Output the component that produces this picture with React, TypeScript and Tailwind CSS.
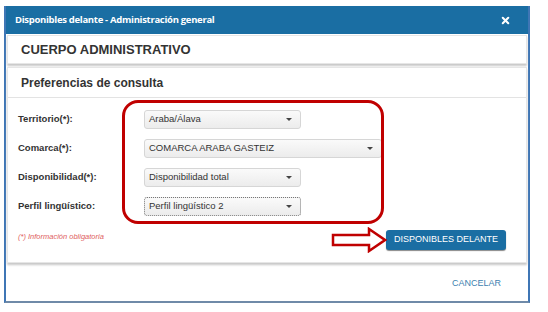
import { X } from "lucide-react";

type Row = { label: string; value: string; wide?: boolean; focus?: boolean };

const rows: Row[] = [
  { label: "Territorio(*):", value: "Araba/Álava" },
  { label: "Comarca(*):", value: "COMARCA ARABA GASTEIZ", wide: true },
  { label: "Disponibilidad(*):", value: "Disponibilidad total" },
  { label: "Perfil lingüístico:", value: "Perfil lingüístico 2", focus: true },
];

function Select({ value, wide, focus }: { value: string; wide?: boolean; focus?: boolean }) {
  return (
    <div
      className={
        "flex h-[19px] items-center justify-between rounded-[3px] bg-gradient-to-b from-[#fafafa] to-[#ececec] pl-[4px] pr-[8px] text-[9.5px] text-[#333] " +
        (wide ? "w-[238px] " : "w-[157px] ") +
        (focus ? "border border-dotted border-[#777]" : "border border-[#d6d6d6]")
      }
    >
      <span>{value}</span>
      <span className="h-0 w-0 border-x-[3px] border-t-[3px] border-x-transparent border-t-[#444]" />
    </div>
  );
}

export default function App() {
  return (
    <div className="h-[312px] w-[548px] bg-white font-['Liberation_Sans',Arial,sans-serif]">
      <div className="ml-[4px] pt-[6px]">
        <div className="flex h-[297px] w-[526px] flex-col border-x-2 border-b-2 border-x-[#3f76b5] border-b-[#6f8aa8] bg-white">
          <div className="flex h-[28px] items-center justify-between bg-[#1a6ea3] pl-[9px] pr-[17px] font-['Open_Sans',sans-serif] text-[9.5px] font-bold tracking-[-0.3px] text-white">
            <span>Disponibles delante - Administración general</span>
            <X className="h-[11px] w-[11px]" strokeWidth={4.5} />
          </div>

          <div className="mx-[1px] mt-[1px] flex h-[29px] items-center border border-[#e6e6e6] px-[13px] text-[13px] font-bold text-[#333] shadow-[0_2px_2px_#c8c8c8]">
            CUERPO ADMINISTRATIVO
          </div>

          <div className="relative mx-[1px] mt-[3px] flex h-[196px] flex-col border border-[#e6e6e6] shadow-[0_2px_2px_#c8c8c8]">
            <div className="flex h-[30px] items-center border-b border-[#e3e3e3] px-[13px] text-[12px] font-bold text-[#333]">
              Preferencias de consulta
            </div>

            <div className="flex flex-col gap-[10px] pl-[10px] pt-[12px]">
              {rows.map((r) => (
                <div key={r.label} className="flex items-center">
                  <span className="w-[126px] text-[9.5px] font-bold text-[#333]">{r.label}</span>
                  <Select value={r.value} wide={r.wide} focus={r.focus} />
                </div>
              ))}
            </div>

            <div className="mt-[14px] flex items-center justify-between pl-[10px] pr-[20px]">
              <span className="mb-[7px] text-[7.5px] italic text-[#e06060]">(*) Información obligatoria</span>
              <div className="flex h-[20px] items-center rounded-[3px] bg-[#1a6ea3] px-[8px] text-[9px] text-white shadow-[0_1px_1px_#888]">
                DISPONIBLES DELANTE
              </div>
            </div>

            <div className="absolute left-[114px] top-[32px] h-[124px] w-[262px] rounded-[16px] border-[3px] border-[#c00000]" />
            <svg className="absolute left-[323px] top-[159px]" width="56" height="26" viewBox="0 0 56 26">
              <path d="M2 8 H38 V2 L54 13 L38 24 V18 H2 Z" fill="none" stroke="#c00000" strokeWidth="2.5" strokeLinejoin="miter" />
            </svg>
          </div>

          <div className="flex flex-1 items-center justify-end pr-[27px] pt-[4px]">
            <span className="text-[9px] text-[#3d7fb0]">CANCELAR</span>
          </div>
        </div>
      </div>
    </div>
  );
}
